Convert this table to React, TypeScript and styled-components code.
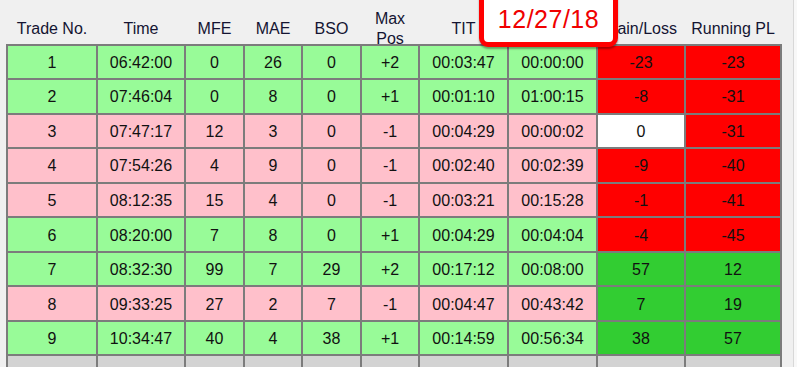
import styled, { createGlobalStyle } from "styled-components";

const GlobalStyle = createGlobalStyle`
  html, body {
    margin: 0;
    padding: 0;
    background: #f0f0f0;
    overflow: hidden;
  }
  body {
    font-family: "Liberation Sans", Arial, sans-serif;
  }
`;

type Tone = "green" | "pink" | "red" | "lime" | "white" | "gray";

const toneColors: Record<Tone, string> = {
  green: "#98fb98",
  pink: "#ffc0cb",
  red: "#ff0000",
  lime: "#32cd32",
  white: "#ffffff",
  gray: "#d3d3d3",
};

const COLUMNS = "88px 86px 57px 56px 57px 56px 87px 87px 86px 94px";

const Frame = styled.div`
  position: relative;
  width: 797px;
  height: 367px;
  overflow: hidden;
  display: flex;
  background: #f0f0f0;
`;

const Panel = styled.div`
  width: 776px;
  padding-left: 6px;
  display: flex;
  flex-direction: column;
`;

const HeaderRow = styled.div`
  display: grid;
  grid-template-columns: ${COLUMNS};
  column-gap: 2px;
  padding: 0 2px;
  height: 43.5px;
`;

const HeaderCell = styled.div`
  display: flex;
  align-items: center;
  justify-content: center;
  padding-top: 9px;
  text-align: center;
  font-size: 16px;
  line-height: 20px;
  color: #141432;
  white-space: pre-line;
`;

const Grid = styled.div`
  display: grid;
  grid-template-columns: ${COLUMNS};
  grid-auto-rows: 32.55px;
  gap: 2px;
  padding: 2px;
  background: #7c7c7c;
`;

const Cell = styled.div<{ $tone: Tone }>`
  display: flex;
  align-items: center;
  justify-content: center;
  padding-top: 2px;
  box-sizing: border-box;
  background: ${(p) => toneColors[p.$tone]};
  font-size: 16px;
  color: #111;
`;

const ScrollStrip = styled.div`
  margin-left: 11px;
  flex: 1;
  border-left: 1px solid #d8d8d8;
  background: #f8f8f8;
`;

const DatePopup = styled.div`
  position: absolute;
  left: 479px;
  top: -20px;
  width: 139px;
  height: 67px;
  box-sizing: border-box;
  border: 5px solid #ff0000;
  border-radius: 9px;
  background: #fff;
  box-shadow: 0 2px 2px rgba(0, 0, 0, 0.35);
  padding-top: 19px;
  text-align: center;
  font-size: 25px;
  line-height: 30px;
  letter-spacing: 0.5px;
  color: #f00000;
`;

// the 8th column's title sits fully under the date popup
const headers = [
  "Trade No.",
  "Time",
  "MFE",
  "MAE",
  "BSO",
  "Max\nPos",
  "TIT",
  "",
  "Gain/Loss",
  "Running PL",
];

type Trade = {
  cells: string[];
  row: Tone;
  gain: Tone;
  running: Tone;
};

const trades: Trade[] = [
  { cells: ["1", "06:42:00", "0", "26", "0", "+2", "00:03:47", "00:00:00", "-23", "-23"], row: "green", gain: "red", running: "red" },
  { cells: ["2", "07:46:04", "0", "8", "0", "+1", "00:01:10", "01:00:15", "-8", "-31"], row: "green", gain: "red", running: "red" },
  { cells: ["3", "07:47:17", "12", "3", "0", "-1", "00:04:29", "00:00:02", "0", "-31"], row: "pink", gain: "white", running: "red" },
  { cells: ["4", "07:54:26", "4", "9", "0", "-1", "00:02:40", "00:02:39", "-9", "-40"], row: "pink", gain: "red", running: "red" },
  { cells: ["5", "08:12:35", "15", "4", "0", "-1", "00:03:21", "00:15:28", "-1", "-41"], row: "pink", gain: "red", running: "red" },
  { cells: ["6", "08:20:00", "7", "8", "0", "+1", "00:04:29", "00:04:04", "-4", "-45"], row: "green", gain: "red", running: "red" },
  { cells: ["7", "08:32:30", "99", "7", "29", "+2", "00:17:12", "00:08:00", "57", "12"], row: "green", gain: "lime", running: "lime" },
  { cells: ["8", "09:33:25", "27", "2", "7", "-1", "00:04:47", "00:43:42", "7", "19"], row: "pink", gain: "lime", running: "lime" },
  { cells: ["9", "10:34:47", "40", "4", "38", "+1", "00:14:59", "00:56:34", "38", "57"], row: "green", gain: "lime", running: "lime" },
  { cells: ["", "", "", "", "", "", "", "", "", ""], row: "gray", gain: "gray", running: "gray" },
];

function toneFor(trade: Trade, col: number): Tone {
  if (col === 8) return trade.gain;
  if (col === 9) return trade.running;
  return trade.row;
}

export default function App() {
  return (
    <>
      <GlobalStyle />
      <Frame>
        <Panel>
          <HeaderRow>
            {headers.map((h, i) => (
              <HeaderCell key={i}>{h}</HeaderCell>
            ))}
          </HeaderRow>
          <Grid>
            {trades.map((t, r) =>
              t.cells.map((value, c) => (
                <Cell key={`${r}-${c}`} $tone={toneFor(t, c)}>
                  {value}
                </Cell>
              ))
            )}
          </Grid>
        </Panel>
        <ScrollStrip />
        <DatePopup>12/27/18</DatePopup>
      </Frame>
    </>
  );
}
